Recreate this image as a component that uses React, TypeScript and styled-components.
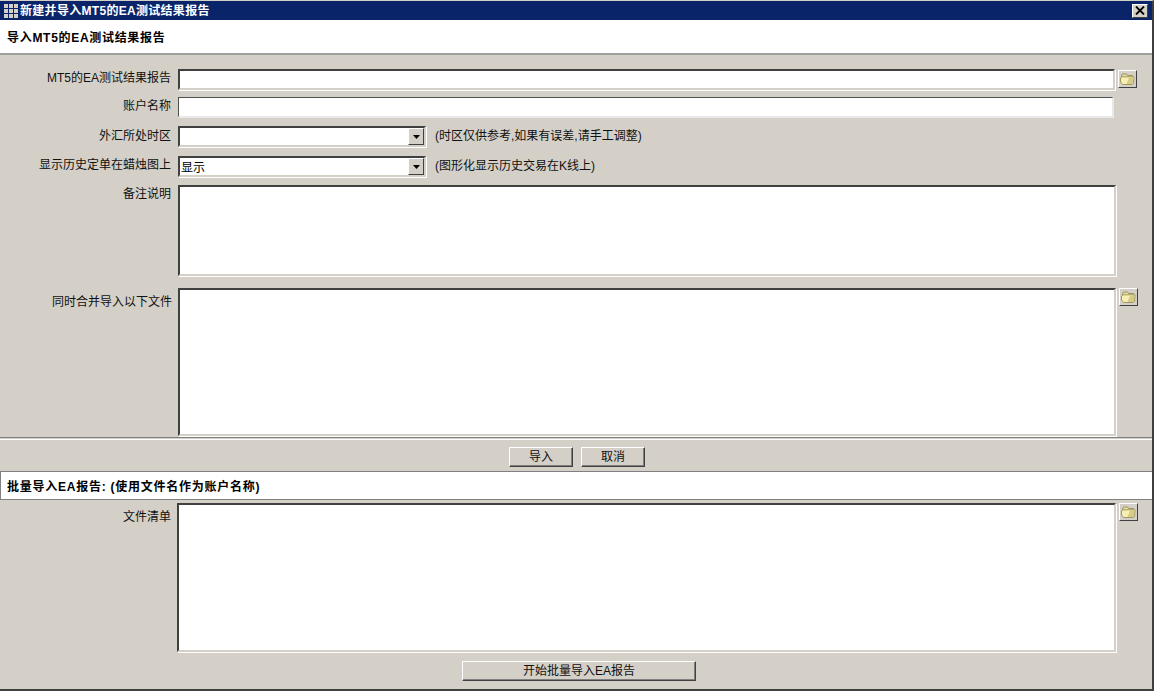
import React from "react";
import styled, { createGlobalStyle } from "styled-components";

const Global = createGlobalStyle`
  html, body { margin: 0; padding: 0; background: #fff; }
  body { font-family: "Liberation Sans", "Noto Sans CJK SC", sans-serif; font-size: 12px; color: #000; }
  * { box-sizing: border-box; }
`;

const Window = styled.div`
  width: 1154px;
  height: 691px;
  background: #d4d0c8;
  border-right: 2px solid #404040;
  border-bottom: 2px solid #404040;
  border-top: 1px solid #d4d0c8;
  display: flex;
  flex-direction: column;
  overflow: hidden;
`;

const TitleBar = styled.div`
  height: 19px;
  background: #0a246a;
  color: #fff;
  font-weight: 700;
  display: flex;
  align-items: center;
  padding: 0 4px 0 2px;
  gap: 1px;
  flex: none;
  line-height: 19px;
`;

const TitleText = styled.span`
  flex: 1;
  padding-top: 2px;
  letter-spacing: 0.3px;
`;

const CloseBox = styled.div`
  width: 16px;
  height: 14px;
  background: #d4d0c8;
  border: 1px solid;
  border-color: #fff #404040 #404040 #fff;
  display: flex;
  align-items: center;
  justify-content: center;
`;

const Banner = styled.div<{ $height: number; $spacing: number }>`
  height: ${(p) => p.$height}px;
  background: #fff;
  font-weight: 700;
  display: flex;
  align-items: center;
  padding-left: 7px;
  letter-spacing: ${(p) => p.$spacing}px;
  flex: none;
`;

const HeadBanner = styled(Banner)`
  border-bottom: 2px solid #a0a0a0;
`;

const BatchBanner = styled(Banner)`
  border-left: 1px solid #808080;
  border-top: 1px solid #808080;
  border-bottom: 1px solid #808080;
  padding-left: 6px;
  margin-top: 4px;
`;

const Row = styled.div<{ $height: number; $top: number }>`
  display: flex;
  height: ${(p) => p.$height}px;
  margin-top: ${(p) => p.$top}px;
  flex: none;
`;

const Label = styled.label<{ $offset?: number; $width?: number; $right?: number }>`
  width: ${(p) => p.$width ?? 178}px;
  flex: none;
  padding-right: ${(p) => p.$right ?? 7}px;
  padding-top: ${(p) => p.$offset ?? 0}px;
  text-align: right;
  color: #111;
  line-height: 18px;
  white-space: nowrap;
`;

const Sunken = styled.div<{ $width: number }>`
  width: ${(p) => p.$width}px;
  height: 100%;
  background: #fff;
  border: 2px solid;
  border-color: #404040 #d4d0c8 #d4d0c8 #404040;
  box-shadow: 1px 1px 0 #fff;
  flex: none;
`;

const PlainInput = styled(Sunken)`
  border-width: 1px;
  border-color: #505050 #e8e8e8 #e8e8e8 #505050;
  box-shadow: 1px 1px 0 #e8e8e8;
`;

const SelectBox = styled(Sunken)`
  display: flex;
  align-items: stretch;
  justify-content: space-between;
  line-height: 20px;
  padding-left: 1px;
`;

const SelectArrow = styled.div`
  width: 16px;
  background: #d4d0c8;
  border: 1px solid;
  border-color: #fff #404040 #404040 #fff;
  display: flex;
  align-items: center;
  justify-content: center;
`;

const Hint = styled.span`
  margin-left: 9px;
  color: #111;
  line-height: 21px;
  white-space: nowrap;
`;

const IconButton = styled.div<{ $top: number }>`
  width: 19px;
  height: 18px;
  margin-left: 3px;
  margin-top: ${(p) => p.$top}px;
  background: #d4d0c8;
  border: 1px solid;
  border-color: #fff #404040 #404040 #fff;
  display: flex;
  align-items: center;
  justify-content: center;
  flex: none;
`;

const Divider = styled.div`
  height: 3px;
  margin-top: 1px;
  border-top: 1px solid #808080;
  border-bottom: 1px solid #fff;
  flex: none;
`;

const ButtonRow = styled.div<{ $top: number; $shift: number }>`
  display: flex;
  justify-content: center;
  gap: 8px;
  margin-top: ${(p) => p.$top}px;
  padding-left: ${(p) => p.$shift}px;
  flex: none;
`;

const PushButton = styled.button<{ $width: number }>`
  width: ${(p) => p.$width}px;
  height: 20px;
  padding: 0;
  background: #d4d0c8;
  border: 1px solid;
  border-color: #fff #404040 #404040 #fff;
  box-shadow: inset -1px -1px 0 #808080;
  font: inherit;
  color: #111;
  line-height: 18px;
`;

const Folder = () => (
  <svg width="15" height="12" viewBox="0 0 15 12">
    <path d="M1.5 3 L2.5 1 H6.5 L7.5 2.5 H12.5 V5 H1.5 Z" fill="#e9e0a0" stroke="#9a9260" />
    <path d="M0.5 5 L2 3.8 H14 L13.5 10.5 L12 11.5 H2.5 L0.5 9 Z" fill="#f6efb4" stroke="#a09860" />
    <path d="M9 4.5 H13.5 L13 10.5 L12 11 H6.5 Z" fill="#d6cc88" />
  </svg>
);

const GridIcon = () => (
  <svg width="17" height="15" viewBox="0 0 17 15">
    <rect width="17" height="15" fill="#0a246a" />
    {[2, 7, 12].map((x) =>
      [1, 6, 11].map((y) => <rect key={`${x}-${y}`} x={x} y={y} width="4" height="4" fill="#d4d0c8" />)
    )}
  </svg>
);

const Arrow = () => (
  <svg width="7" height="4" viewBox="0 0 7 4">
    <path d="M0 0 H7 L3.5 4 Z" fill="#000" />
  </svg>
);

const CloseIcon = () => (
  <svg width="10" height="9" viewBox="0 0 10 9">
    <path d="M1 0.5 L9 8.5 M9 0.5 L1 8.5" stroke="#000" strokeWidth="1.8" />
  </svg>
);

export default function App() {
  return (
    <>
      <Global />
      <Window>
        <TitleBar>
          <GridIcon />
          <TitleText>新建并导入MT5的EA测试结果报告</TitleText>
          <CloseBox>
            <CloseIcon />
          </CloseBox>
        </TitleBar>
        <HeadBanner $height={35} $spacing={0.7}>导入MT5的EA测试结果报告</HeadBanner>

        <Row $height={21} $top={14}>
          <Label>MT5的EA测试结果报告</Label>
          <Sunken $width={937} />
          <IconButton $top={1}>
            <Folder />
          </IconButton>
        </Row>
        <Row $height={20} $top={7}>
          <Label>账户名称</Label>
          <PlainInput $width={935} />
        </Row>
        <Row $height={21} $top={9}>
          <Label $offset={1}>外汇所处时区</Label>
          <SelectBox $width={248}>
            <span />
            <SelectArrow>
              <Arrow />
            </SelectArrow>
          </SelectBox>
          <Hint>(时区仅供参考,如果有误差,请手工调整)</Hint>
        </Row>
        <Row $height={21} $top={9}>
          <Label>显示历史定单在蜡烛图上</Label>
          <SelectBox $width={248}>
            <span>显示</span>
            <SelectArrow>
              <Arrow />
            </SelectArrow>
          </SelectBox>
          <Hint>(图形化显示历史交易在K线上)</Hint>
        </Row>
        <Row $height={91} $top={8}>
          <Label>备注说明</Label>
          <Sunken $width={938} />
        </Row>
        <Row $height={148} $top={12}>
          <Label $offset={5} $right={6}>同时合并导入以下文件</Label>
          <Sunken $width={938} />
          <IconButton $top={0}>
            <Folder />
          </IconButton>
        </Row>
        <Divider />
        <ButtonRow $top={7} $shift={2}>
          <PushButton $width={64}>导入</PushButton>
          <PushButton $width={64}>取消</PushButton>
        </ButtonRow>
        <BatchBanner $height={29} $spacing={0.75}>批量导入EA报告: (使用文件名作为账户名称)</BatchBanner>
        <Row $height={149} $top={3}>
          <Label $offset={5} $width={177} $right={6}>文件清单</Label>
          <Sunken $width={939} />
          <IconButton $top={0}>
            <Folder />
          </IconButton>
        </Row>
        <ButtonRow $top={9} $shift={6}>
          <PushButton $width={234}>开始批量导入EA报告</PushButton>
        </ButtonRow>
      </Window>
    </>
  );
}
